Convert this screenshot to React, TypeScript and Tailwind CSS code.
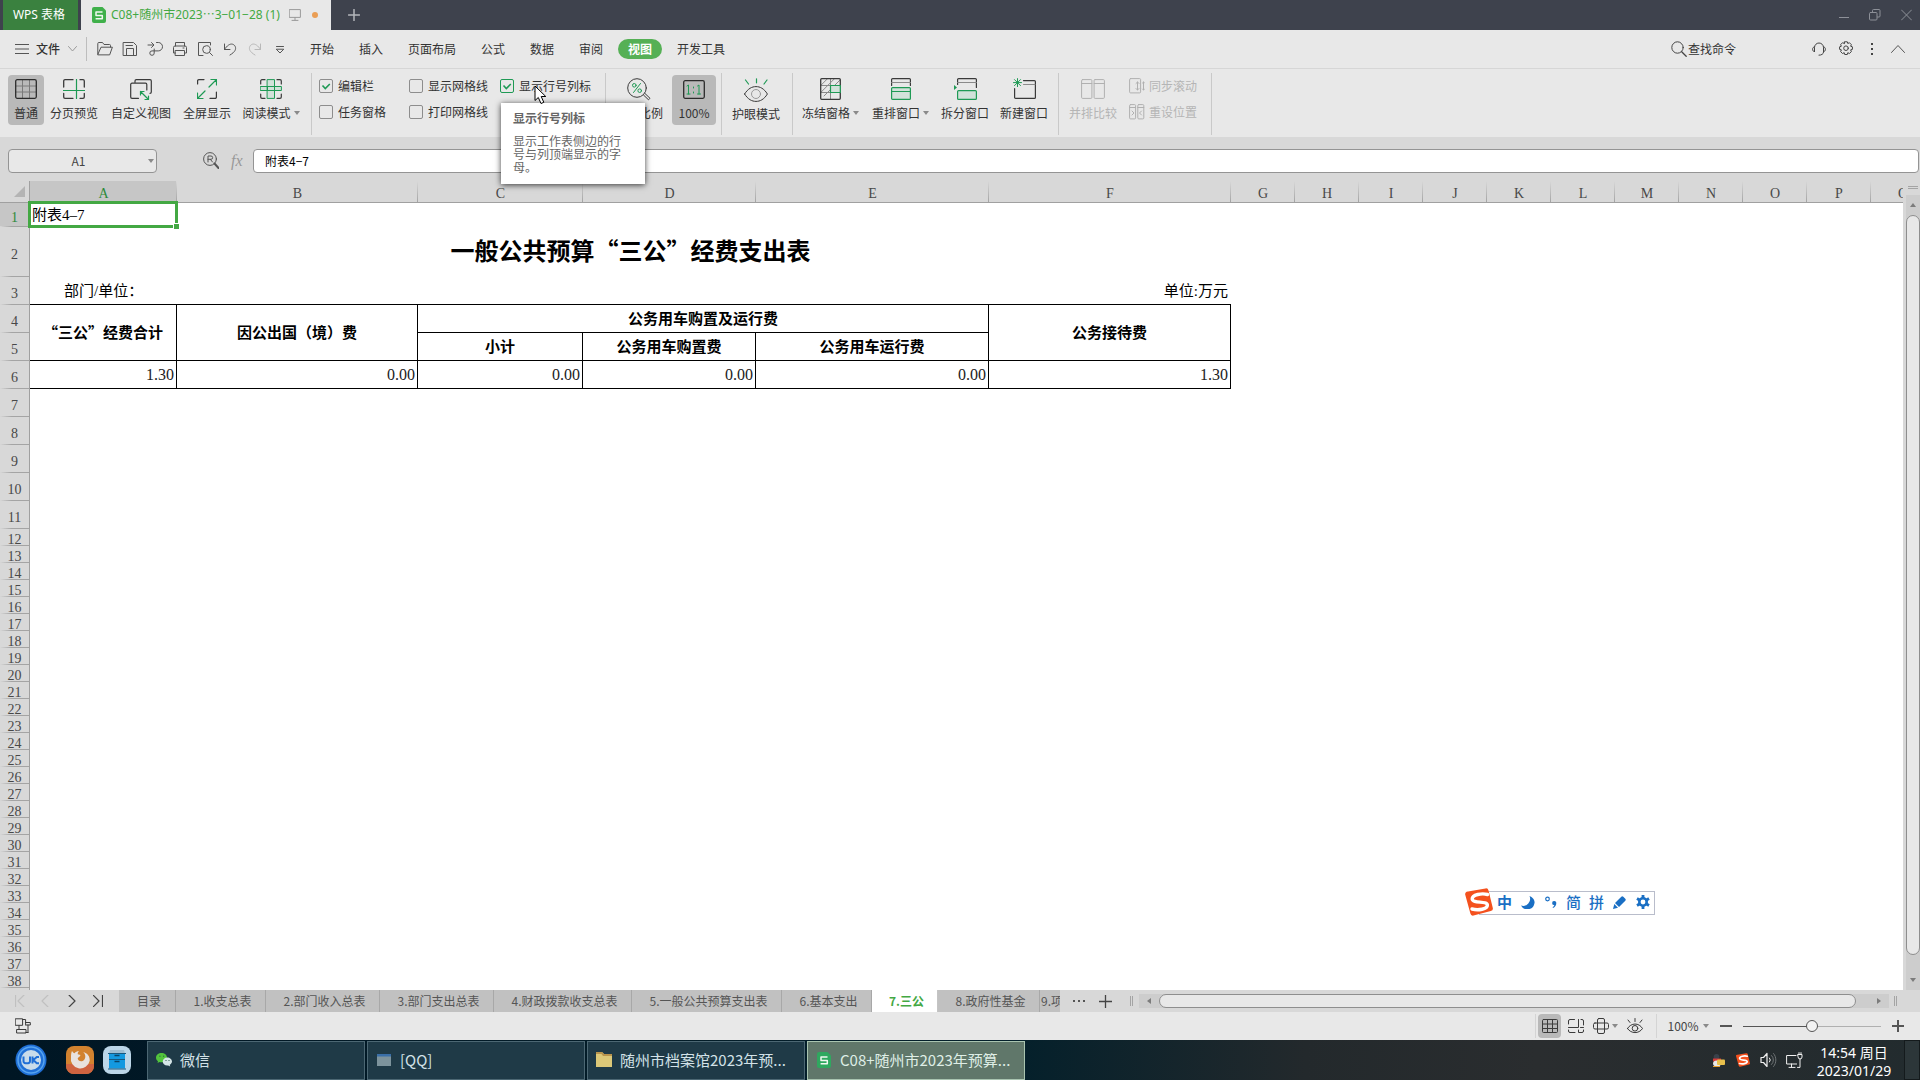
import type { ReactNode } from "react";
import { clsx } from "clsx";

const INK = "#3a3a3a";
const GREEN = "#1f9a55";

const menuTabs = ["开始", "插入", "页面布局", "公式", "数据", "审阅", "视图", "开发工具"];

const wideCols = ["A", "B", "C", "D", "E", "F"];
const narrowCols = ["G", "H", "I", "J", "K", "L", "M", "N", "O", "P", "Q"];

const sheetTabs = [
  { name: "目录", width: "w-[57px]" },
  { name: "1.收支总表", width: "w-[90px]" },
  { name: "2.部门收入总表", width: "w-[114px]" },
  { name: "3.部门支出总表", width: "w-[114px]" },
  { name: "4.财政拨款收支总表", width: "w-[138px]" },
  { name: "5.一般公共预算支出表", width: "w-[150px]" },
  { name: "6.基本支出", width: "w-[90px]" },
  { name: "7.三公", width: "w-[66px]" },
  { name: "8.政府性基金", width: "w-[102px]" },
];

/* ---------- ICONS ---------- */

type IconProps = {
  w?: number;
  h?: number;
  color?: string;
  children: ReactNode;
};

function Icon({ w = 16, h = 16, color = INK, children }: IconProps) {
  return (
    <svg
      width={w}
      height={h}
      viewBox={`0 0 ${w} ${h}`}
      fill="none"
      stroke={color}
      strokeLinecap="round"
      strokeLinejoin="round"
      className="shrink-0"
      aria-hidden="true"
    >
      {children}
    </svg>
  );
}

function Caret() {
  return (
    <svg width="6" height="4" viewBox="0 0 6 4" className="shrink-0" aria-hidden="true">
      <path d="M0 0h6L3 4z" fill="#8a8a8a" />
    </svg>
  );
}

function SheetLogo({ muted = false }: { muted?: boolean }) {
  return (
    <svg width="14" height="16" viewBox="0 0 14 16" className="shrink-0" aria-hidden="true">
      <path d="M2 0h8.5L14 3.5V14a2 2 0 0 1-2 2H2a2 2 0 0 1-2-2V2a2 2 0 0 1 2-2z" fill={muted ? "#2fa85f" : "#3fb04a"} />
      <path d="M10.500 5H4v3.400h6.300v3.400H3.600" fill="none" stroke="#f0f8f0" strokeWidth="1.500" strokeLinejoin="round" />
    </svg>
  );
}

function SogouLogo({ size }: { size: number }) {
  return (
    <svg width={size} height={size} viewBox="0 0 28 28" className="shrink-0" aria-hidden="true">
      <path d="M3 3.6 20.5.4a2.6 2.6 0 0 1 3 2L27.800 20a2.600 2.600 0 0 1-2 3.100L8.500 27.600a2.600 2.600 0 0 1-3.100-2L.3 7A2.600 2.600 0 0 1 3 3.600z" fill="#f4511e" />
      <path d="M22.500 6.500C17 5 7 6.500 7.200 11c.2 4.600 15 1.600 15.200 6 .1 4.300-9.400 5.600-15.400 4" fill="none" stroke="#fff" strokeWidth="3.400" strokeLinecap="round" />
    </svg>
  );
}

const ico = {
  normal: (
    <Icon w={22} h={20} color="#2b2b2b">
      <path d="M.8 7h20.400M.8 13h20.400M7.500 1v18M14.500 1v18" stroke="#7a7a7a" />
      <rect x=".7" y=".7" width="20.600" height="18.600" rx="1.500" strokeWidth="1.300" />
    </Icon>
  ),
  pageBreak: (
    <Icon w={22} h={20}>
      <path d="M10 .7H2A1.300 1.300 0 0 0 .7 2v6M17 .7h3A1.300 1.300 0 0 1 21.300 2v6M.7 14.500V18A1.300 1.300 0 0 0 2 19.300h8M17 19.300h3a1.300 1.300 0 0 0 1.300-1.300v-3.500" strokeWidth="1.300" />
      <path d="M13.500.5v19M.5 11.500h21" stroke={GREEN} strokeWidth="1.200" />
    </Icon>
  ),
  custom: (
    <Icon w={22} h={21}>
      <path d="M5 3V2A1.300 1.300 0 0 1 6.300.7H20A1.300 1.300 0 0 1 21.300 2v11a1.300 1.300 0 0 1-1.300 1.300M8.500 19.300H2A1.300 1.300 0 0 1 .7 18V5.500A1.300 1.300 0 0 1 2 4.200h13.500A1.300 1.300 0 0 1 16.800 5.500v5.500" strokeWidth="1.200" />
      <path d="m10.500 12.500 8 8M10.500 16v-3.500H14M18.500 17v3.500H15" stroke={GREEN} strokeWidth="1.200" />
    </Icon>
  ),
  fullscreen: (
    <Icon w={20} h={20}>
      <path d="M.6 5V2A1.300 1.300 0 0 1 2 .6h5M13 19.400h5a1.300 1.300 0 0 0 1.400-1.400v-5" strokeWidth="1.200" />
      <path d="m12 8 7.500-7.500M14 .5h5.500V6M8 12 .5 19.500M.5 14v5.500H6" stroke={GREEN} strokeWidth="1.200" />
    </Icon>
  ),
  reading: (
    <Icon w={22} h={20}>
      <path d="M5 .7H2A1.300 1.300 0 0 0 .7 2v3M17 .7h3A1.300 1.300 0 0 1 21.300 2v3M.7 15v3A1.300 1.300 0 0 0 2 19.300h3M21.300 15v3a1.300 1.300 0 0 1-1.300 1.300h-3" strokeWidth="1.200" />
      <path d="M7.500.6h7v18.800h-7zM.6 7.500h20.800v4H.6z" fill="#d2e2da" stroke={GREEN} />
      <path d="M7.500 7.500v4M14.500 7.500v4" stroke={GREEN} />
    </Icon>
  ),
  zoom: (
    <Icon w={24} h={23}>
      <circle cx="10" cy="10" r="9.300" />
      <path d="m16.500 17 5 4.800 1.500-1.500-5-4.800" />
      <circle cx="7.300" cy="7.300" r="1.800" stroke={GREEN} />
      <circle cx="12.700" cy="12.700" r="1.800" stroke={GREEN} />
      <path d="m13.500 5.500-7 9" stroke={GREEN} />
    </Icon>
  ),
  oneToOne: (
    <Icon w={22} h={19} color="#2b2b2b">
      <rect x=".7" y=".7" width="20.600" height="17.600" rx="1.500" strokeWidth="1.300" />
      <path d="m4 6 1.500-1v9M4 14h3M14.500 6 16 5v9M14.500 14h3M10.500 7v1M10.500 12v1" stroke={GREEN} />
    </Icon>
  ),
  eye: (
    <Icon w={24} h={24}>
      <path d="M.6 16C4 10.500 8 8.600 12 8.600S20 10.500 23.400 16C20 21.500 16 23.400 12 23.400S4 21.500.6 16z" />
      <circle cx="12" cy="16" r="4.500" stroke="#9a9a9a" />
      <path d="M12.500.8v4M1.500 2l3 4M23 2l-3 4" stroke={GREEN} strokeWidth="1.200" />
    </Icon>
  ),
  freeze: (
    <Icon w={21} h={22}>
      <path d="M.7 7.500h19.600M.7 14.500h19.600M10.500.7v20.600M.7 7.500 7.500.7M.7 14.500 14.500.7M4 18 20 2" stroke="#8a8a8a" />
      <rect x=".7" y=".7" width="19.600" height="20.600" rx="1" strokeWidth="1.300" />
      <path d="M10.500 7.500h9.800v7h-9.800z" fill="#d2e2da" stroke={GREEN} strokeWidth="1.200" />
    </Icon>
  ),
  arrange: (
    <Icon w={20} h={22}>
      <path d="M.6 7.500V1.600a1 1 0 0 1 1-1h16.800a1 1 0 0 1 1 1v5.900" strokeWidth="1.200" />
      <path d="M.6 4.500h18.800" stroke="#8a8a8a" />
      <rect x=".6" y="9.600" width="18.800" height="11.800" rx="1" fill="#d2e2da" stroke={GREEN} strokeWidth="1.200" />
      <path d="M.6 13.500h18.800" stroke={GREEN} />
    </Icon>
  ),
  split: (
    <Icon w={24} h={22}>
      <path d="M4.600 6.500V1.600a1 1 0 0 1 1-1h16.800a1 1 0 0 1 1 1v7.900" strokeWidth="1.200" />
      <path d="M4.600 4.500h18.800" stroke="#8a8a8a" />
      <path d="M1 7v5l3-2.500z" fill={GREEN} stroke="none" />
      <rect x="4.600" y="12.600" width="18.800" height="8.800" rx="1" fill="#d2e2da" stroke={GREEN} strokeWidth="1.200" />
    </Icon>
  ),
  newWindow: (
    <Icon w={24} h={22}>
      <path d="M11.500 2.600h10.900a1 1 0 0 1 1 1v15.800a1 1 0 0 1-1 1H3.600a1 1 0 0 1-1-1V10.500" strokeWidth="1.200" />
      <path d="M11.500 6.500h11.500" stroke="#8a8a8a" />
      <path d="M5.500.6v8M1.500 4.600h8M2.500 1.600l6 6M8.500 1.600l-6 6" stroke={GREEN} />
    </Icon>
  ),
  compare: (
    <Icon w={24} h={20} color="#b0b0b0">
      <rect x=".6" y=".6" width="10.300" height="18.800" rx="1" />
      <rect x="13.100" y=".6" width="10.300" height="18.800" rx="1" />
      <path d="M.6 4.500h10.300M13.100 4.500h10.300" />
    </Icon>
  ),
  syncScroll: (
    <Icon w={16} h={16} color="#b0b0b0">
      <rect x=".6" y=".6" width="11" height="14.300" rx="1" />
      <path d="M8.500 4v8M7 5.500 8.500 4 10 5.500M7 10.500 8.500 12l1.500-1.500M14.500 4v8M13.500 5l1-1 1 1M13.500 11l1 1 1-1" />
    </Icon>
  ),
  resetPos: (
    <Icon w={16} h={16} color="#b0b0b0">
      <rect x=".6" y=".6" width="6" height="14.300" rx="1" />
      <rect x="8.800" y=".6" width="6" height="14.300" rx="1" />
      <path d="M.6 3.500h6M8.800 3.500h6M3 7l2 2-2 2M12.500 7l-2 2 2 2" />
    </Icon>
  ),
};

const quickIcons: { label: string; icon: ReactNode }[] = [
  { label: "打开", icon: <><path d="M.8 13V2.500A1 1 0 0 1 1.800 1.500h3.700l1.500 2h5.500a1 1 0 0 1 1 1V6" /><path d="M.8 13.500 4 6.200h11.400l-2.600 7.300z" /></> },
  { label: "保存", icon: <><path d="M1.500 1.500h10l3 3v10h-13z" /><path d="M4.500 14V7.500h7V14M4 4.500h6.500" /></> },
  { label: "导出", icon: <path d="M1 4h5.500M4.500 1.500 7 4 4.500 6.500M9.500 1.500h1.800a4.200 4.200 0 0 1 0 8.400H5a2.200 2.200 0 1 0 2.200 2.200V8" /> },
  { label: "打印", icon: <path d="M3.500 5V1.500h9V5M3.500 12h-2V6.500A1.500 1.500 0 0 1 3 5h10a1.500 1.500 0 0 1 1.500 1.500V12h-2M3.500 9.500h9v5h-9zM11 7h1" /> },
  { label: "打印预览", icon: <><path d="M6 14.500H1.500v-13h12V4" /><circle cx="9.500" cy="8.500" r="3.800" /><path d="m12.500 11.500 3 3" /></> },
  { label: "撤销", icon: <path d="M2.500 3v5.500H8M2.500 8.500C5 4.500 8 2.500 10.500 3.200s4 3.500 2.500 6.300c-.8 1.500-2.500 3-5 4.500" /> },
  { label: "恢复", icon: <path stroke="#b8b8b8" d="M13.500 3v5.500H8M13.500 8.500C11 4.500 8 2.500 5.500 3.200s-4 3.500-2.500 6.300c.8 1.500 2.500 3 5 4.500" /> },
  { label: "更多", icon: <path d="M4.500 5.500h7M4.500 8.500 8 12l3.500-3.500z" /> },
];

/* ---------- TITLE BAR ---------- */

function TitleBar() {
  return (
    <header className="flex h-[30px] shrink-0 items-stretch bg-[#3e424d]">
      <button className="ml-[3px] w-[75px] bg-[#3a813f] pr-[3px] text-center font-['Noto_Sans','Noto_Sans_CJK_SC',sans-serif] text-white">
        WPS 表格
      </button>
      <div className="ml-[3px] flex w-[250px] items-center bg-[#e8e8e8] pl-[11px] text-[#43a843]">
        <SheetLogo />
        <span className="ml-[5px] w-[173px] whitespace-nowrap font-['Noto_Sans','Noto_Sans_CJK_SC',sans-serif]">
          C08+随州市2023⋯3−01−28 (1)
        </span>
        <span className="ml-[5px]">
          <Icon w={12} h={12} color="#9a9a9a">
            <path d="M.6.6h10.800v7.800H.6zM6 8.500v2.500M3 11.400h6" />
          </Icon>
        </span>
        <span className="ml-[11px] size-[6px] rounded-full bg-[#ea9e55]" />
      </div>
      <button className="ml-[17px] flex items-center" aria-label="新建">
        <Icon w={12} h={12} color="#b4b6bb">
          <path d="M6 .5v11M.5 6h11" strokeWidth="1.500" />
        </Icon>
      </button>
      <div className="ml-auto flex items-center gap-5 pr-2">
        <button aria-label="最小化">
          <Icon w={10} h={12} color="#8d9098"><path d="M0 8.500h10" /></Icon>
        </button>
        <button aria-label="还原">
          <Icon w={12} h={12} color="#8d9098">
            <rect x=".5" y="3.500" width="7.500" height="7.500" rx="1" />
            <path d="M3.500 3V1.500a1 1 0 0 1 1-1H10a1 1 0 0 1 1 1V7a1 1 0 0 1-1 1H8.500" />
          </Icon>
        </button>
        <button aria-label="关闭">
          <Icon w={11} h={12} color="#8d9098"><path d="m.5 1 10 10M10.500 1l-10 10" /></Icon>
        </button>
      </div>
    </header>
  );
}

/* ---------- MENU ---------- */

function MenuBar() {
  return (
    <nav className="flex h-[39px] shrink-0 items-center border-b border-[#d6d6d6] bg-[#e8e8e8] pl-[15px] text-[#333]">
      <button className="flex items-center">
        <Icon w={14} h={10} color="#555"><path d="M0 .5h14M0 5h14M0 9.500h14" /></Icon>
        <span className="ml-[7px] w-6 font-medium">文件</span>
        <span className="ml-2">
          <Icon w={9} h={6} color="#999"><path d="m.5.500 4 4.500 4-4.500" /></Icon>
        </span>
      </button>
      <div className="ml-[9px] h-6 w-px bg-[#bdbdbd]" />
      <div className="ml-[5px] flex">
        {quickIcons.map((q) => (
          <button key={q.label} aria-label={q.label} className="flex w-[25px] justify-center">
            <Icon color="#555">{q.icon}</Icon>
          </button>
        ))}
      </div>
      <div className="ml-2 flex gap-[5px]">
        {menuTabs.map((tab) => (
          <button
            key={tab}
            className={clsx(
              "h-5 whitespace-nowrap px-[10px]",
              tab === "视图" && "rounded-full bg-[#55b055] font-bold text-white"
            )}
          >
            {tab}
          </button>
        ))}
      </div>
      <button className="ml-auto flex items-center gap-px">
        <Icon color="#444"><circle cx="6.500" cy="6.500" r="5.700" /><path d="m10.700 10.700 4.500 4.500" strokeWidth="1.300" /></Icon>
        查找命令
      </button>
      <div className="ml-[70px] flex items-center pr-[9px]">
        <button aria-label="客服" className="flex w-[26px] justify-center">
          <Icon w={14} h={14} color="#444">
            <path d="M2.500 9.500V5.500C2.500 3 4.500 1 7 1s4.500 2 4.500 4.500v4.500C11.500 12 9.500 13.200 7 13.200M2.500 5C1 5 .6 6 .6 7.300S1 9.500 2.500 9.500M11.500 5c1.500 0 1.900 1 1.900 2.300s-.4 2.200-1.900 2.200" />
          </Icon>
        </button>
        <button aria-label="设置" className="flex w-[27px] justify-center">
          <Icon color="#444">
            <path d="M6.700.8h2.600l.5 1.700 1.600-.8 2 2-.8 1.500 1.800.6v2.600l-1.800.5.8 1.700-2 1.900-1.600-.8-.5 1.800H6.700l-.5-1.800-1.700.8-1.900-1.900.8-1.700-1.800-.5V5.800l1.800-.6-.8-1.500 1.900-2 1.700.8z" />
            <circle cx="8" cy="7.200" r="2.300" />
          </Icon>
        </button>
        <button aria-label="更多选项" className="flex w-[26px] justify-center">
          <Icon w={2} h={12} color="none"><path d="M0 0h2v2H0zM0 5h2v2H0zM0 10h2v2H0z" fill="#444" /></Icon>
        </button>
        <button aria-label="折叠功能区" className="flex w-[26px] justify-center">
          <Icon w={14} h={8} color="#555"><path d="m.5 7.500 6.500-7 6.500 7" /></Icon>
        </button>
      </div>
    </nav>
  );
}

/* ---------- RIBBON ---------- */

type ToolProps = {
  label: string;
  icon: ReactNode;
  width: string;
  active?: boolean;
  caret?: boolean;
  disabled?: boolean;
};

function Tool({ label, icon, width, active, caret, disabled }: ToolProps) {
  return (
    <button
      disabled={disabled}
      className={clsx(
        "flex h-[50px] shrink-0 flex-col items-center rounded pt-[3px]",
        width,
        active && "bg-[#b9b9b9]",
        disabled ? "text-[#b5b5b5]" : "text-[#333]"
      )}
    >
      <span className="flex h-6 items-center">{icon}</span>
      <span className="flex h-[26px] items-center gap-[3px] whitespace-nowrap">
        {label}
        {caret && <Caret />}
      </span>
    </button>
  );
}

function Separator({ className }: { className?: string }) {
  return <div className={clsx("-mt-[2px] h-[62px] w-px shrink-0 bg-[#c9c9c9]", className)} />;
}

function Check({ label, checked = false, hot = false }: { label: string; checked?: boolean; hot?: boolean }) {
  return (
    <label className="flex h-[26px] items-center gap-[5px] whitespace-nowrap text-[#333]">
      <span className="relative size-[14px]">
        <input
          type="checkbox"
          defaultChecked={checked}
          className={clsx(
            "block size-[14px] appearance-none rounded-[2px] border",
            hot ? "border-[#1f9a55]" : "border-[#8d8d8d]"
          )}
        />
        {checked && (
          <svg viewBox="0 0 14 14" className="pointer-events-none absolute inset-0" aria-hidden="true">
            <path d="m3.500 6.500 2.800 3L10.800 5" fill="none" stroke={GREEN} strokeWidth="1.600" />
          </svg>
        )}
      </span>
      {label}
    </label>
  );
}

function Ribbon() {
  return (
    <section className="flex h-[68px] shrink-0 items-start bg-[#e8e8e8] pl-2 pt-[6px]">
      <Tool label="普通" icon={ico.normal} width="w-9" active />
      <Tool label="分页预览" icon={ico.pageBreak} width="w-[60px]" />
      <Tool label="自定义视图" icon={ico.custom} width="w-[74px]" />
      <Tool label="全屏显示" icon={ico.fullscreen} width="w-[58px]" />
      <Tool label="阅读模式" icon={ico.reading} width="w-[70px]" caret />
      <Separator className="ml-[5px]" />

      <div className="ml-[7px] -mt-[2px] flex">
        <div className="w-[90px]">
          <Check label="编辑栏" checked />
          <Check label="任务窗格" />
        </div>
        <div className="w-[91px]">
          <Check label="显示网格线" />
          <Check label="打印网格线" />
        </div>
        <div className="relative w-[105px]">
          <Check label="显示行号列标" checked hot />

          {/* TOOLTIP */}
          <div
            role="tooltip"
            className="absolute left-[1px] top-[30px] z-10 h-[81px] w-36 bg-white px-3 pt-[7px] text-[#666] shadow-[0_1px_6px_rgba(0,0,0,0.75)]"
          >
            <p className="font-bold leading-4">显示行号列标</p>
            <p className="mt-2 w-[110px] leading-[13px]">显示工作表侧边的行号与列顶端显示的字母。</p>
          </div>

          {/* POINTER */}
          <svg width="14" height="20" viewBox="0 0 14 20" className="absolute left-[34px] top-3 z-20" aria-hidden="true">
            <path d="M1 1v14.500l3.300-3 2.700 6 2.800-1.200-2.600-5.800h4.600z" fill="#fff" stroke="#000" />
          </svg>
        </div>
      </div>
      <Separator />

      <Tool label="显示比例" icon={ico.zoom} width="w-[66px]" />
      <Tool label="100%" icon={ico.oneToOne} width="w-11" active />
      <Separator className="ml-[5px]" />
      <Tool label="护眼模式" icon={ico.eye} width="w-[68px]" />
      <Separator className="ml-[2px]" />
      <Tool label="冻结窗格" icon={ico.freeze} width="w-[75px]" caret />
      <Tool label="重排窗口" icon={ico.arrange} width="w-[65px]" caret />
      <Tool label="拆分窗口" icon={ico.split} width="w-16" />
      <Tool label="新建窗口" icon={ico.newWindow} width="w-[54px]" />
      <Separator className="ml-[7px]" />
      <Tool label="并排比较" icon={ico.compare} width="w-[68px]" disabled />
      <div className="-mt-[2px] ml-[2px] w-20 text-[#b5b5b5]">
        <button disabled className="flex h-[26px] items-center gap-1">
          {ico.syncScroll}同步滚动
        </button>
        <button disabled className="flex h-[26px] items-center gap-1">
          {ico.resetPos}重设位置
        </button>
      </div>
      <Separator className="ml-[2px]" />
    </section>
  );
}

/* ---------- FORMULA BAR ---------- */

function FormulaBar() {
  return (
    <section className="flex h-11 shrink-0 items-center bg-[#d8d8d8] pl-2 pr-px pt-[3px]">
      <button aria-label="名称框" className="flex h-6 w-[149px] items-center rounded border border-[#949494] bg-[#e8e8e8] pr-[2px] text-[#444]">
        <span className="flex-1 text-center">A1</span>
        <Caret />
      </button>
      <span className="ml-[46px]">
        <Icon w={16} h={17} color="#555">
          <circle cx="7" cy="7" r="6.400" />
          <path d="m11.500 11.500 4 4.500" strokeWidth="2" />
          <path d="M5 10V4h3a1.600 1.600 0 0 1 0 3.300H5M7.500 7.500 9.500 10" />
        </Icon>
      </span>
      <span className="ml-3 w-[22px] font-['Liberation_Serif',serif] text-base italic text-[#999]">fx</span>
      <input
        aria-label="编辑栏"
        defaultValue="附表4−7"
        className="h-6 min-w-0 flex-1 rounded border border-[#949494] bg-white px-[11px] text-black outline-none"
      />
    </section>
  );
}

/* ---------- SHEET ---------- */

const colLine = "bg-[linear-gradient(#d8d8d8,#a4a4a4)] bg-[length:1px_100%] bg-right bg-no-repeat";
const rowLine = "bg-[linear-gradient(90deg,#d8d8d8,#a4a4a4_40%)] bg-[length:100%_1px] bg-bottom bg-no-repeat";

function RowHead({ n, active }: { n?: number; active?: boolean }) {
  return (
    <th
      scope="row"
      className={clsx(
        "border-r border-[#a0a0a0] p-0 pt-1 text-center font-normal leading-[13px]",
        rowLine,
        active ? "bg-[#c6c6c6] text-[#2d8a3a]" : "bg-[#d8d8d8] text-[#484848]"
      )}
    >
      {n}
    </th>
  );
}

function rowHeight(n: number) {
  return n <= 11 ? "h-7" : "h-[17px]";
}

const head = "border-b border-r border-black p-0 pb-[2px] text-center align-middle font-['Noto_Sans_CJK_SC',sans-serif] text-[15px] font-bold";
const num = "border-b border-r border-black p-0 pr-[2px] text-right align-middle text-base text-[#222]";

function Sheet() {
  const blankRows = Array.from({ length: 32 }, (_, i) => i + 7);

  return (
    <main className="relative flex min-h-0 flex-1 bg-[#d8d8d8]">
      <div className="min-w-0 flex-1 overflow-hidden bg-white">
        <table className="w-[1935px] table-fixed border-separate border-spacing-0 font-['Liberation_Serif','Noto_Sans_CJK_SC',serif] text-sm leading-4 text-black">
          <colgroup>
            <col className="w-[30px]" />
            <col className="w-[147px]" />
            <col className="w-[241px]" />
            <col className="w-[165px]" />
            <col className="w-[173px]" />
            <col className="w-[233px]" />
            <col className="w-[242px]" />
            {narrowCols.map((c) => (
              <col key={c} className="w-16" />
            ))}
          </colgroup>
          <thead>
            <tr className="h-[22px]">
              <th className="border-b border-r border-[#a0a0a0] bg-[#d8d8d8] p-0">
                <svg width="11" height="11" viewBox="0 0 11 11" className="ml-[14px]" aria-hidden="true">
                  <path d="M11 0v11H0z" fill="#b4b4b4" />
                </svg>
              </th>
              {[...wideCols, ...narrowCols].map((c) => (
                <th
                  key={c}
                  scope="col"
                  className={clsx(
                    "border-b border-[#a0a0a0] p-0 pt-[5px] text-center font-normal",
                    colLine,
                    c === "A" ? "bg-[#c6c6c6] text-[#2d8a3a]" : "bg-[#d8d8d8] text-[#484848]"
                  )}
                >
                  {c}
                </th>
              ))}
            </tr>
          </thead>
          <tbody>
            <tr className="h-6">
              <RowHead n={1} active />
              <td className="relative p-0 pl-[2px] text-[15px]">
                附表4–7
                <div className="pointer-events-none absolute -bottom-px -left-[2px] -right-px -top-[2px] border-[3px] border-[#43a843]" />
                <div className="absolute -bottom-[2px] -right-[2px] size-[6px] border-l border-t border-white bg-[#43a843]" />
              </td>
            </tr>
            <tr className="h-[50px]">
              <RowHead n={2} />
              <td colSpan={6} className="p-0 pb-1 text-center font-['Noto_Sans_CJK_SC',sans-serif] text-2xl font-bold leading-8">
                一般公共预算“三公”经费支出表
              </td>
            </tr>
            <tr className="h-7">
              <RowHead n={3} />
              <td className="border-b border-black p-0 pl-[34px] text-[15px]">部门/单位：</td>
              <td colSpan={4} className="border-b border-black p-0" />
              <td className="border-b border-black p-0 pr-[3px] text-right text-[15px]">单位:万元</td>
            </tr>
            <tr className="h-7">
              <RowHead n={4} />
              <th rowSpan={2} className={head}>“三公”经费合计</th>
              <th rowSpan={2} className={head}>因公出国（境）费</th>
              <th colSpan={3} className={head}>公务用车购置及运行费</th>
              <th rowSpan={2} className={head}>公务接待费</th>
            </tr>
            <tr className="h-7">
              <RowHead n={5} />
              <th className={head}>小计</th>
              <th className={head}>公务用车购置费</th>
              <th className={head}>公务用车运行费</th>
            </tr>
            <tr className="h-7">
              <RowHead n={6} />
              {["1.30", "0.00", "0.00", "0.00", "0.00", "1.30"].map((v, i) => (
                <td key={i} className={num}>{v}</td>
              ))}
            </tr>
            {blankRows.map((n) => (
              <tr key={n} className={rowHeight(n)}>
                <RowHead n={n} />
              </tr>
            ))}
            <tr className="h-[17px]">
              <RowHead />
            </tr>
          </tbody>
        </table>
      </div>

      {/* VERTICAL SCROLLBAR */}
      <div className="flex w-[17px] shrink-0 flex-col pl-[3px]">
        <div className="mx-auto mt-[5px] h-[3px] w-[10px] shrink-0 border-y border-[#a4a4a4]" />
        <div className="mt-[6px] flex min-h-0 flex-1 flex-col bg-[#cdcdcd]">
          <button aria-label="向上滚动" className="flex h-5 shrink-0 items-center justify-center">
            <svg width="6" height="4" aria-hidden="true"><path d="M0 4h6L3 0z" fill="#7c7c7c" /></svg>
          </button>
          <div className="flex-1 rounded-full border border-[#8e8e8e] bg-[#e8e8e8]" />
          <button aria-label="向下滚动" className="flex h-[35px] shrink-0 items-end justify-center pb-2">
            <svg width="6" height="4" aria-hidden="true"><path d="M0 0h6L3 4z" fill="#7c7c7c" /></svg>
          </button>
        </div>
      </div>

      <ImeBar />
    </main>
  );
}

function ImeBar() {
  const cell = "flex w-[23px] shrink-0 justify-center";
  return (
    <div className="absolute bottom-[75px] right-[265px] flex h-6 w-[176px] items-center border border-[#b9bdcb] bg-white pb-[2px] pl-[13px] font-['Noto_Sans_CJK_SC',sans-serif] text-[15px] font-medium leading-5 text-[#1a6fc4]">
      <div className="absolute -left-[15px] -top-1">
        <SogouLogo size={28} />
      </div>
      <button className={clsx(cell, "font-bold")}>中</button>
      <button className={cell} aria-label="半角">
        <svg width="14" height="13" viewBox="0 0 14 13"><path d="M8.500 0A7 7 0 0 1 0 9.500 7.200 7.200 0 0 0 13.500 7C14 4 11.500 1 8.500 0z" fill="#1a6fc4" /></svg>
      </button>
      <button className={cell} aria-label="标点">
        <svg width="12" height="13" viewBox="0 0 12 13">
          <circle cx="2.500" cy="3" r="1.800" fill="none" stroke="#1a6fc4" strokeWidth="1.200" />
          <path d="M9 5a2 2 0 0 1 2.300 2.200c0 2-1.300 4-3.300 4.800l-.4-.8c1-.5 1.500-1.200 1.700-2.200A2 2 0 0 1 9 5z" fill="#1a6fc4" />
        </svg>
      </button>
      <button className={cell}>简</button>
      <button className={cell}>拼</button>
      <button className={cell} aria-label="手写">
        <svg width="13" height="13" viewBox="0 0 13 13"><path d="M8.300.8a1.500 1.500 0 0 1 2 0l2 2a1.500 1.500 0 0 1 0 2L6 11 2 7zM1.300 8 5 11.800 0 13z" fill="#1a6fc4" /></svg>
      </button>
      <button className={cell} aria-label="输入法设置">
        <svg width="14" height="14" viewBox="0 0 14 14">
          <circle cx="7" cy="7" r="3.700" fill="none" stroke="#1a6fc4" strokeWidth="2.600" />
          <path d="M7 0v3M7 11v3M1 3.500 3.500 5M10.500 9l2.500 1.500M1 10.500 3.500 9M10.500 5 13 3.500" stroke="#1a6fc4" strokeWidth="2.800" />
        </svg>
      </button>
    </div>
  );
}

/* ---------- SHEET TABS ---------- */

function SheetTabs() {
  return (
    <section className="flex h-[22px] shrink-0 items-stretch bg-[#d8d8d8] text-[#555]">
      <div className="flex w-[119px] shrink-0 items-center pl-[15px]">
        {["M.5 0v12M9 0 3 6l6 6", "M7 0 1 6l6 6", "m2 0 6 6-6 6", "m0 0 6 6-6 6M9.500 0v12"].map((d, i) => (
          <button key={d} aria-label={["首个", "上一个", "下一个", "末个"][i]} className="w-[26px]">
            <Icon w={10} h={12} color={i < 2 ? "#c0c0c0" : "#444"}>
              <path d={d} strokeWidth="1.200" />
            </Icon>
          </button>
        ))}
      </div>
      {sheetTabs.map((t) => (
        <button
          key={t.name}
          className={clsx(
            "shrink-0 whitespace-nowrap border-r pl-1 text-center",
            t.width,
            t.name === "7.三公"
              ? "border-[#c4c4c4] bg-white font-bold text-[#43a843]"
              : "border-[#a8a8a8] bg-[#c1c1c1]"
          )}
        >
          {t.name}
        </button>
      ))}
      <button className="w-5 shrink-0 overflow-hidden whitespace-nowrap bg-[#c1c1c1] pl-px text-left">9.项</button>
      <button aria-label="更多工作表" className="ml-3 flex items-center">
        <Icon w={14} h={2} color="none"><path d="M1 0h2v2H1zM6 0h2v2H6zM11 0h2v2h-2z" fill="#555" /></Icon>
      </button>
      <button aria-label="新建工作表" className="ml-[13px] flex items-center">
        <Icon w={13} h={13} color="#444"><path d="M6.500 0v13M0 6.500h13" strokeWidth="1.300" /></Icon>
      </button>
      <div className="ml-[18px] h-[10px] w-[3px] self-center border-x border-[#a4a4a4]" />
      <div className="ml-[6px] flex min-w-0 flex-1 items-stretch self-center bg-[#cdcdcd]">
        <button aria-label="向左滚动" className="flex w-5 items-center justify-center">
          <svg width="4" height="6" aria-hidden="true"><path d="M4 0v6L0 3z" fill="#7c7c7c" /></svg>
        </button>
        <div className="h-[14px] flex-1 rounded-full border border-[#8e8e8e] bg-[#e8e8e8]" />
        <button aria-label="向右滚动" className="flex w-[33px] items-center justify-end pr-2">
          <svg width="4" height="6" aria-hidden="true"><path d="M0 0v6l4-3z" fill="#7c7c7c" /></svg>
        </button>
      </div>
      <div className="ml-[5px] mr-[23px] h-[10px] w-[3px] self-center border-x border-[#a4a4a4]" />
    </section>
  );
}

/* ---------- STATUS BAR ---------- */

function StatusBar() {
  return (
    <footer className="flex h-7 shrink-0 items-center bg-[#e8e8e8] pl-[15px] pr-4 text-[#444]">
      <Icon>
        <path d="M.6.8h7v6.500h-7zM7.600 1.500h3v5M10.500 4.500h4.800v2.500h-4.800M13 7v7.500M4 7.500v4M2 11.500h9v3.500H2zM11 14.500h2" />
      </Icon>
      <div className="ml-auto flex items-center">
        <div className="h-6 w-px bg-[#d4d4d4]" />
        <button aria-label="普通视图" className="ml-[2px] flex h-6 w-[23px] items-center justify-center rounded bg-[#b9b9b9]">
          <Icon w={16} h={14}><rect x=".5" y=".5" width="15" height="13" rx="1" /><path d="M.5 5h15M.5 9.500h15M5.500.5v13M10.500.5v13" /></Icon>
        </button>
        <button aria-label="分页预览" className="ml-[7px]">
          <Icon w={16} h={14}><path d="M.5 5V2A1.500 1.500 0 0 1 2 .5h4.500M10.500.5v8H.5M13 .5h1A1.500 1.500 0 0 1 15.500 2v4M15.500 8.500h-3M.5 11v1A1.500 1.500 0 0 0 2 13.500h5M10.500 11v2.500H14a1.500 1.500 0 0 0 1.500-1.500v-1" /></Icon>
        </button>
        <button aria-label="阅读模式" className="ml-[9px] flex items-center gap-[3px]">
          <Icon w={16} h={16}><rect x="4.500" y=".5" width="7" height="15" rx="1.500" /><rect x=".5" y="5" width="15" height="6" rx="1.500" /></Icon>
          <Caret />
        </button>
        <button aria-label="护眼模式" className="ml-[9px]">
          <Icon w={16} h={16}><path d="M.5 10.500C4 4.500 12 4.500 15.500 10.500 12 16 4 16 .5 10.500zM8 .5v3M1 2 3 4.500M15 2l-2 2.500" /><circle cx="8" cy="10.300" r="2.800" /></Icon>
        </button>
        <div className="ml-[13px] h-6 w-px bg-[#d4d4d4]" />
        <button className="ml-[10px] flex items-center gap-1">
          <span className="w-8 text-center">100%</span>
          <Caret />
        </button>
        <button aria-label="缩小" className="ml-[11px]">
          <Icon w={12} h={12} color="#555"><path d="M0 6h12" strokeWidth="2" /></Icon>
        </button>
        <input
          type="range"
          aria-label="缩放"
          defaultValue={50}
          className="ml-[11px] h-3 w-[138px] appearance-none bg-[linear-gradient(90deg,#555_50%,#b0b0b0_50%)] bg-[length:100%_1px] bg-center bg-no-repeat [&::-webkit-slider-thumb]:size-3 [&::-webkit-slider-thumb]:appearance-none [&::-webkit-slider-thumb]:rounded-full [&::-webkit-slider-thumb]:border [&::-webkit-slider-thumb]:border-[#555] [&::-webkit-slider-thumb]:bg-[#f2f2f2]"
        />
        <button aria-label="放大" className="ml-[11px]">
          <Icon w={12} h={12} color="#555"><path d="M0 6h12M6 0v12" strokeWidth="2" /></Icon>
        </button>
      </div>
    </footer>
  );
}

/* ---------- TASKBAR ---------- */

const tasks = [
  {
    name: "微信",
    icon: (
      <svg width="16" height="14" viewBox="0 0 16 14">
        <path d="M5.500 0C2.500 0 0 2 0 4.700c0 1.500.8 2.700 2 3.500L1.500 10l2-1c3.500 1 7.500-1 7.500-4.300C11 2 8.500 0 5.500 0z" fill="#52c43c" />
        <path d="M11.300 4.500C8.800 4.500 6.700 6.300 6.700 8.600s2.300 4.400 5.500 3.900l2 1-.5-1.700c1.300-.8 2.300-1.900 2.300-3.300 0-2.200-2.200-4-4.700-4z" fill="#d5e4e6" />
        <path d="M3.300 3.200h1.200M7 3.200h1.200M9.500 7.500h1M12.500 7.500h1" stroke="#2a5a48" />
      </svg>
    ),
  },
  {
    name: "[QQ]",
    icon: (
      <svg width="14" height="12" viewBox="0 0 14 12">
        <path d="M0 0h14v12H0z" fill="#7d939c" />
        <path d="M0 0h14v2.500H0z" fill="#3a6fa8" />
      </svg>
    ),
  },
  {
    name: "随州市档案馆2023年预...",
    icon: (
      <svg width="16" height="15" viewBox="0 0 16 15">
        <path d="M0 0h6l2 2h8v13H0z" fill="#dcc878" />
        <path d="M0 0h6l2 2h8v2H7L5.500 2H0z" fill="#b8934c" />
      </svg>
    ),
  },
  { name: "C08+随州市2023年预算...", icon: <SheetLogo muted />, active: true },
];

function Taskbar() {
  return (
    <footer className="flex h-10 shrink-0 items-stretch overflow-hidden bg-[linear-gradient(90deg,#001624,#04202b_53%,#23292c_68%,#2a2d2f_80%,#222b2e)] text-[15px] text-[#d3e2e8]">
      <div className="flex w-[147px] shrink-0 items-center pl-[15px]">
        <button aria-label="开始菜单">
          <svg width="32" height="32" viewBox="0 0 32 32">
            <circle cx="16" cy="16" r="15.500" fill="#1f6fd6" />
            <circle cx="16" cy="16" r="13" fill="none" stroke="#57a4ef" strokeWidth="1.500" />
            <circle cx="16" cy="16" r="10" fill="#c9dcea" />
            <path d="M8.500 12.500v4.500a2 2 0 0 0 2 2.200h2.500a2 2 0 0 0 2-2.200v-4.500M17.500 12.500v7M24 13h-2.200L18.300 16l3.500 3.200H24" fill="none" stroke="#1f6fd6" strokeWidth="2" />
          </svg>
        </button>
        <button aria-label="浏览器" className="ml-[19px]">
          <svg width="28" height="28" viewBox="0 0 28 28">
            <rect width="28" height="28" rx="8" fill="#d2822f" />
            <path d="M0 18h28v2a8 8 0 0 1-8 8H8a8 8 0 0 1-8-8z" fill="#cf6340" />
            <path d="M6 5c.8 1.300 1.600 2 2.600 2.200C9.600 6 11 5 13 5c-1 1-1.400 2-1.200 3.200l2.700.8c-.4 1.800-2.200 2.200-2.800 3.300.2 2.500 2.800 3.700 5 2.700 2.500-1.200 3.300-4.200 2-7-.4-1-1-1.500-1.700-2 4.500 1 7 4.500 6.700 8.700A9.400 9.400 0 1 1 5 11c0-2.500.2-4.500 1-6z" fill="#e8e2de" />
          </svg>
        </button>
        <button aria-label="文件管理器" className="ml-[9px]">
          <svg width="28" height="28" viewBox="0 0 28 28">
            <rect width="28" height="28" rx="8" fill="#bcd6e8" />
            <path d="M6 7.500h16v15H6z" fill="#1499e0" />
            <path d="M7 4h14l1 3.500H6z" fill="#9dbdd2" />
            <path d="M5 7.500h18M6 13.500h16M5 23h18" stroke="#18587f" />
            <path d="M11.500 9.500h5M11.500 15.500h5" stroke="#0b4467" strokeWidth="1.500" />
          </svg>
        </button>
      </div>
      <div className="flex gap-[2px] pt-px">
        {tasks.map((t) => (
          <button
            key={t.name}
            className={clsx(
              "flex w-[218px] items-center gap-2 whitespace-nowrap border px-2 pb-[2px]",
              t.active ? "border-[#a9c4b0] bg-[#60776a] text-[#dfeee6]" : "border-[#4c6773] bg-[#1f3a47]"
            )}
          >
            <span className="flex w-4 justify-center">{t.icon}</span>
            {t.name}
          </button>
        ))}
      </div>
      <div className="ml-auto flex items-center">
        <svg width="13" height="13" viewBox="0 0 13 13" aria-hidden="true">
          <ellipse cx="4.500" cy="3" rx="2.800" ry="3" fill="#39414a" />
          <path d="M1 4.500h8v3H1z" fill="#d33a3a" />
          <ellipse cx="5" cy="9.500" rx="4" ry="3" fill="#e8e8e8" />
          <rect x="5" y="5.500" width="8" height="5.500" rx="1" fill="#e8c04c" />
          <path d="M1 12.500h7" stroke="#e8a02c" />
        </svg>
        <span className="ml-[11px]"><SogouLogo size={14} /></span>
        <span className="ml-[10px]">
          <Icon w={17} h={16} color="#f0f0f0">
            <path d="M1 5.500h2.500l3.500-4v13l-3.500-4H1z" strokeWidth="1.200" />
            <path d="M9.500 6a3 3 0 0 1 0 4" />
            <path d="M11.500 3.500a6 6 0 0 1 0 9M13.500 1.500c3.200 3.500 3.200 9.500 0 13" stroke="#6f7476" />
          </Icon>
        </span>
        <span className="ml-[9px]">
          <Icon w={17} h={16} color="#f0f0f0">
            <path d="M10 3.500H.6v8.500h10M5.500 12v3M3 15.400h6M14 7v8.400h-2.500M12 2.500h4V5a2 2 0 0 1-4 0zM13 2.500V.6M15 2.500V.6" />
          </Icon>
        </span>
        <div className="ml-[9px] w-[84px] pt-1 text-center font-['Noto_Sans','Noto_Sans_CJK_SC',sans-serif] text-sm leading-[18px] text-white">
          <div>14:54 周日</div>
          <div>2023/01/29</div>
        </div>
      </div>
      <button aria-label="显示桌面" className="ml-2 w-4 border border-[#141a1c] bg-[#2c3639]" />
    </footer>
  );
}

export default function App() {
  return (
    <div className="flex h-screen flex-col overflow-hidden font-['Noto_Sans_CJK_SC',sans-serif] text-xs">
      <TitleBar />
      <MenuBar />
      <Ribbon />
      <FormulaBar />
      <Sheet />
      <SheetTabs />
      <StatusBar />
      <Taskbar />
    </div>
  );
}
